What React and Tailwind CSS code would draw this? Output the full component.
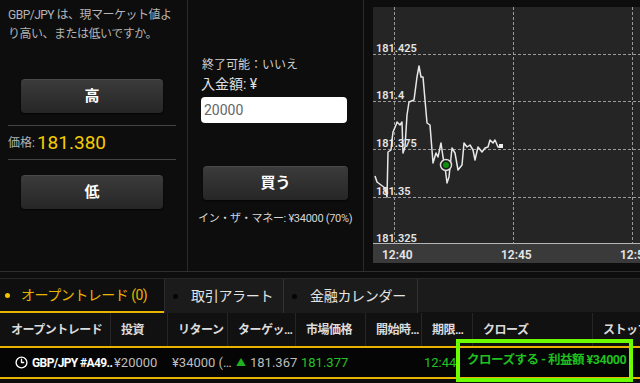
import React from 'react';
import { Clock3 } from 'lucide-react';

// price path inside the chart svg (origin at chart top-left)
const pricePoints = [
  [2, 169], [4, 175], [8, 178], [12, 181], [14, 190], [15, 145], [18, 143], [19, 133],
  [20, 125], [23, 118], [24, 115], [27, 118], [29, 115], [30, 146], [32, 140], [34, 108],
  [36, 95], [41, 93], [44, 70], [46, 59], [48, 70], [50, 70], [54, 116], [57, 118],
  [60, 156], [63, 146], [65, 150], [68, 136], [70, 150], [72, 160], [74, 176], [76, 170],
  [79, 141], [82, 146], [85, 163], [89, 158], [91, 136], [94, 140], [97, 138], [100, 143],
  [102, 153], [105, 140], [109, 145], [112, 141], [115, 140], [117, 133], [120, 136],
  [122, 133], [125, 140], [129, 140],
];

const gridY = [47, 94, 142, 190];
const gridX = [21, 140, 259];
const yLabels = [
  { y: 45, t: '181.425' },
  { y: 92, t: '181.4' },
  { y: 140, t: '181.375' },
  { y: 188, t: '181.35' },
  { y: 235, t: '181.325' },
];
const xLabels = [
  { x: 9, t: '12:40' },
  { x: 128, t: '12:45' },
  { x: 247, t: '12:5' },
];

const columns = [
  { label: 'オープントレード', w: 'w-[110px]' },
  { label: '投資', w: 'w-[57px]' },
  { label: 'リターン', w: 'w-[60px]' },
  { label: 'ターゲッ…', w: 'w-[68px]' },
  { label: '市場価格', w: 'w-[70px]' },
  { label: '開始時…', w: 'w-[56px]' },
  { label: '期限…', w: 'w-[51px]' },
  { label: 'クローズ', w: 'w-[120px]' },
  { label: 'ストップ', w: 'flex-1' },
];

function PriceChart() {
  return (
    <svg width="267" height="256" viewBox="0 0 267 256" className="block">
      <rect x="0" y="0" width="267" height="236" fill="#252525" />
      {gridY.map((y) => (
        <line key={y} x1="0" x2="267" y1={y + 0.5} y2={y + 0.5} stroke="#9a9a9a" strokeWidth="1" strokeDasharray="3 2" />
      ))}
      {gridX.map((x) => (
        <line key={x} x1={x + 0.5} x2={x + 0.5} y1="0" y2="236" stroke="#9a9a9a" strokeWidth="1" strokeDasharray="3 2" />
      ))}
      {yLabels.map((l) => (
        <text key={l.t} x="3" y={l.y} fill="#e6e6e6" fontSize="11" fontWeight="600" fontFamily="Roboto, sans-serif">
          {l.t}
        </text>
      ))}
      <polyline
        points={pricePoints.map((p) => p.join(',')).join(' ')}
        fill="none"
        stroke="#e8e8e8"
        strokeWidth="1.5"
        strokeLinejoin="round"
      />
      <rect x="126" y="137" width="4" height="4" fill="#f0f0f0" />
      <circle cx="73" cy="158" r="5.5" fill="#1a1a1a" stroke="#dcdcdc" strokeWidth="1.5" />
      <circle cx="73" cy="158" r="3" fill="#0e8f0e" />
      <rect x="0" y="236" width="267" height="20" fill="#3a3a3a" />
      <line x1="0" x2="267" y1="236.5" y2="236.5" stroke="#b5b5b5" strokeWidth="1" />
      {xLabels.map((l) => (
        <text key={l.t} x={l.x} y="252" fill="#e6e6e6" fontSize="12" fontWeight="600" fontFamily="Roboto, sans-serif">
          {l.t}
        </text>
      ))}
    </svg>
  );
}

function DarkButton({ children, className }) {
  return (
    <button
      className={`h-[34px] rounded-[4px] bg-gradient-to-b from-[#3b3b3b] to-[#262626] border-t border-[#4a4a4a] shadow-[0_1px_2px_rgba(0,0,0,0.8)] text-white font-bold text-[15px] ${className}`}
    >
      {children}
    </button>
  );
}

export default function App() {
  return (
    <div className="w-[640px] h-[383px] overflow-hidden bg-[#0e0e0e] font-[Roboto,'Noto_Sans_CJK_JP',sans-serif] relative">
      {/* top panels */}
      <div className="flex h-[272px] border-b border-[#2e2e2e] bg-[#0d0d0d]">
        {/* high / low */}
        <div className="w-[188px] border-r border-[#2a2a2a] px-2 pt-[6px] flex flex-col">
          <p className="text-[12px] leading-[19px] tracking-[-0.5px] text-[#b4b4b4]">
            GBP/JPY は、現マーケット値より高い、または低いですか。
          </p>
          <DarkButton className="mt-[35px] ml-[13px] w-[142px]">高</DarkButton>
          <div className="mt-[12px] mr-[3px] h-px bg-[#444]" />
          <div className="h-[33px] flex items-center gap-[2px]">
            <span className="text-[12px] text-[#b4b4b4]">価格:</span>
            <span className="text-[19px] text-[#f5cb00] leading-none">181.380</span>
          </div>
          <div className="mr-[3px] h-px bg-[#444]" />
          <DarkButton className="mt-[15px] ml-[13px] w-[142px]">低</DarkButton>
        </div>

        {/* amount / buy */}
        <div className="w-[176px] border-r border-[#2a2a2a] flex flex-col pt-[56px]">
          <div className="pl-[14px] text-[12px] leading-[18px] text-[#d0d0d0]">終了可能：いいえ</div>
          <div className="pl-[13px] text-[14px] leading-[20px] text-[#e0e0e0]">入金額: ¥</div>
          <div className="ml-[13px] mt-[3px] w-[146px] h-[26px] rounded-[4px] bg-white flex items-center px-[3px] text-[14px] text-[#666]">
            20000
          </div>
          <DarkButton className="mt-[43px] ml-[15px] w-[145px]">買う</DarkButton>
          <div className="mt-[11px] pl-[10px] text-[11px] tracking-[-0.3px] text-[#d6d6d6] whitespace-nowrap">
            イン・ザ・マネー: ¥34000 (70%)
          </div>
        </div>

        {/* chart */}
        <div className="flex-1 pl-[9px] pt-[7px]">
          <PriceChart />
        </div>
      </div>

      {/* tabs */}
      <div className="mt-[6px] flex h-[35px] border-t border-[#262626] bg-[#1b1b1b]">
        <div className="w-[164px] flex items-center gap-[11px] pl-[5px] bg-[#0f0f0f] border-b-2 border-[#e8b400]">
          <span className="w-[5px] h-[5px] rounded-full bg-[#f2c200]" />
          <span className="text-[14px] tracking-[-0.5px] text-[#e8b400]">オープントレード (0)</span>
        </div>
        <div className="w-[120px] flex items-center gap-[13px] pl-[8px] border-l border-[#2c2c2c] border-r border-r-[#333]">
          <span className="w-[5px] h-[5px] rounded-full bg-[#050505]" />
          <span className="text-[14px] tracking-[-0.3px] text-[#e4e4e4]">取引アラート</span>
        </div>
        <div className="w-[134px] flex items-center gap-[13px] pl-[8px] border-r border-[#333]">
          <span className="w-[5px] h-[5px] rounded-full bg-[#050505]" />
          <span className="text-[14px] tracking-[-0.3px] text-[#e4e4e4]">金融カレンダー</span>
        </div>
        <div className="flex-1 border-b border-[#111]" />
      </div>

      {/* table header */}
      <div className="flex h-[35px] bg-[#111] border-b-2 border-[#e8b400]">
        {columns.map((c, i) => (
          <div
            key={c.label}
            className={`${c.w} h-full flex items-center whitespace-nowrap overflow-hidden text-[12px] tracking-[-0.5px] font-bold text-[#dcdcdc] ${
              i === 0 ? 'pl-[11px]' : 'pl-[10px] border-l border-[#262626]'
            }`}
          >
            {c.label}
          </div>
        ))}
      </div>

      {/* trade row */}
      <div className="flex h-[31px] items-center bg-[#050505] border-b-2 border-[#e8b400] text-[13px] whitespace-nowrap">
        <div className="w-[114px] flex items-center pl-[15px] gap-[4px] text-white font-bold overflow-hidden">
          <Clock3 size={13} strokeWidth={2.5} className="text-white shrink-0" />
          <span className="text-[12px] tracking-[-0.6px]">GBP/JPY #A49..</span>
        </div>
        <div className="w-[58px] text-[#bdbdbd]">¥20000</div>
        <div className="w-[64px] text-[#bdbdbd]">¥34000 (…</div>
        <div className="w-[65px] flex items-center gap-[4px] text-[#bdbdbd]">
          <span className="text-[10px] text-[#20b020]">▲</span>
          <span>181.367</span>
        </div>
        <div className="w-[123px] text-[#22c422]">181.377</div>
        <div className="w-[40px] text-[#22c422]">12:44</div>
      </div>

      {/* highlight box over the close column */}
      <div className="absolute left-[456px] top-[339px] w-[177px] h-[43px] border-[4px] border-[#6cff00] flex items-center pl-[7px]">
        <span className="text-[12.5px] tracking-[-0.5px] font-bold text-[#1fbf1f] whitespace-nowrap">クローズする - 利益額 ¥34000</span>
      </div>
    </div>
  );
}
